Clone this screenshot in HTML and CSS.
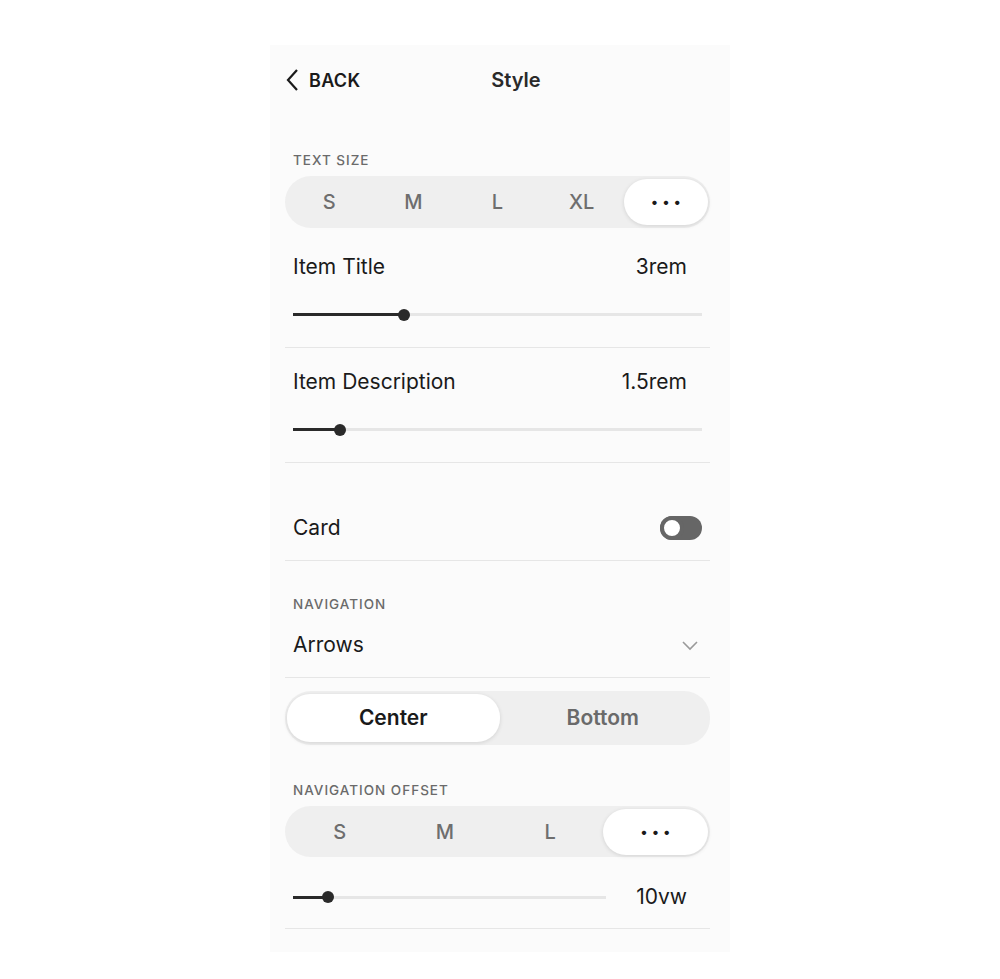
FILE: index.html
```html
<!DOCTYPE html>
<html lang="en">
<head>
  <meta charset="UTF-8" />
  <title>Style</title>
  <link rel="stylesheet" href="styles.css">
</head>
<body>

<div class="panel">
  <div class="header">
    <button class="back">
      <svg width="15" height="24" viewBox="0 0 15 24"><path d="M12 2 L3 12 L12 22" fill="none" stroke="#1a1a1a" stroke-width="2.2"/></svg>
      <span>BACK</span>
    </button>
    <h1 class="title">Style</h1>
  </div>

  <div class="label">TEXT SIZE</div>
  <div class="segment">
    <span>S</span>
    <span>M</span>
    <span>L</span>
    <span>XL</span>
    <span class="active dots">&bull;&bull;&bull;</span>
  </div>

  <div class="row first">
    <div class="row-head"><span>Item Title</span><span>3rem</span></div>
    <div class="slider"><div class="fill" style="width: 111px"></div></div>
  </div>

  <div class="row">
    <div class="row-head"><span>Item Description</span><span>1.5rem</span></div>
    <div class="slider"><div class="fill" style="width: 47px"></div></div>
  </div>

  <div class="row toggle-row">
    <span>Card</span>
    <span class="toggle"></span>
  </div>

  <div class="label nav-label">NAVIGATION</div>
  <div class="row select-row">
    <span>Arrows</span>
    <svg width="18" height="12" viewBox="0 0 18 12"><path d="M2 3 L9 10 L16 3" fill="none" stroke="#9a9a9a" stroke-width="1.6"/></svg>
  </div>

  <div class="segment wide">
    <span class="active">Center</span>
    <span>Bottom</span>
  </div>

  <div class="label offset-label">NAVIGATION OFFSET</div>
  <div class="segment four">
    <span>S</span>
    <span>M</span>
    <span>L</span>
    <span class="active dots">&bull;&bull;&bull;</span>
  </div>

  <div class="row offset-row">
    <div class="slider"><div class="fill" style="width: 35px"></div></div>
    <span class="value">10vw</span>
  </div>
</div>

</body>
</html>
```

FILE: styles.css
```css
body {
  margin: 0;
  background: #fff;
  color: #1a1a1a;
  font-family: Inter, "Noto Sans", sans-serif;
}

.panel {
  width: 425px;
  margin: 45px 0 0 270px;
  padding: 0 20px 23px 15px;
  background: #fbfbfb;
}

.header {
  height: 70px;
  display: flex;
  align-items: center;
  position: relative;
}

.back {
  display: flex;
  align-items: center;
  gap: 9px;
  background: none;
  border: none;
  padding: 0;
  font-family: inherit;
  font-size: 18px;
  font-weight: 600;
  letter-spacing: 0.3px;
  color: #1a1a1a;
}

.title {
  position: absolute;
  left: 0;
  right: 0;
  margin: 0;
  text-align: center;
  font-size: 20px;
  font-weight: 600;
  color: #2a2a2a;
  pointer-events: none;
  padding-left: 37px;
}

.label {
  margin-top: 37px;
  padding-left: 8px;
  font-size: 13.5px;
  line-height: 16px;
  letter-spacing: 1px;
  font-weight: 500;
  color: #6a6a6a;
}

.segment {
  margin-top: 8px;
  height: 52px;
  background: #efefef;
  border-radius: 26px;
  display: grid;
  grid-template-columns: repeat(5, 1fr);
  align-items: center;
  padding: 0 2px;
}

.segment span {
  text-align: center;
  font-size: 20px;
  font-weight: 500;
  color: #6e6e6e;
  height: 46px;
  line-height: 46px;
  border-radius: 23px;
}

.segment .active {
  background: #fff;
  color: #1a1a1a;
  box-shadow: 0 1px 4px rgba(0, 0, 0, 0.12);
}

.segment .dots {
  font-size: 14px;
  letter-spacing: 4px;
  padding-left: 4px;
}

.segment.wide {
  margin-top: 13px;
  height: 54px;
  grid-template-columns: 1fr 1fr;
}

.segment.wide span {
  height: 48px;
  line-height: 48px;
  font-size: 21px;
  font-weight: 600;
  color: #6a6a6a;
}

.segment.wide .active {
  color: #1a1a1a;
  margin-right: -2px;
}

.segment.four {
  height: 51px;
  grid-template-columns: repeat(4, 1fr);
}

.row {
  padding: 22px 8px 31px;
  border-bottom: 1px solid #e6e6e6;
}

.row.first {
  margin-top: 5px;
}

.row-head {
  display: flex;
  justify-content: space-between;
  font-size: 21px;
  line-height: 24px;
  padding-right: 15px;
}

.slider {
  position: relative;
  margin-top: 34px;
  height: 3px;
  background: #e6e6e6;
}

.fill {
  height: 3px;
  background: #2a2a2a;
  position: relative;
}

.fill::after {
  content: "";
  position: absolute;
  right: -6px;
  top: -4.5px;
  width: 12px;
  height: 12px;
  border-radius: 50%;
  background: #2a2a2a;
}

.toggle-row {
  display: flex;
  justify-content: space-between;
  align-items: center;
  font-size: 21px;
  line-height: 24px;
  padding-top: 53px;
  padding-bottom: 20px;
}

.toggle {
  width: 42px;
  height: 24px;
  border-radius: 12px;
  background: #666;
  position: relative;
}

.toggle::after {
  content: "";
  position: absolute;
  left: 0;
  top: 0;
  width: 16px;
  height: 16px;
  border-radius: 50%;
  background: #fff;
  border: 4px solid #666;
}

.nav-label {
  margin-top: 35px;
}

.select-row {
  display: flex;
  justify-content: space-between;
  align-items: center;
  font-size: 21px;
  line-height: 24px;
  padding-top: 21px;
  padding-bottom: 20px;
  padding-right: 11px;
}

.offset-label {
  margin-top: 37px;
}

.offset-row {
  display: flex;
  align-items: center;
  gap: 30px;
  padding-top: 28px;
  padding-bottom: 19px;
  line-height: 24px;
}

.offset-row .slider {
  flex: 1;
  margin-top: 0;
}

.value {
  font-size: 21px;
  padding-right: 15px;
}
```
